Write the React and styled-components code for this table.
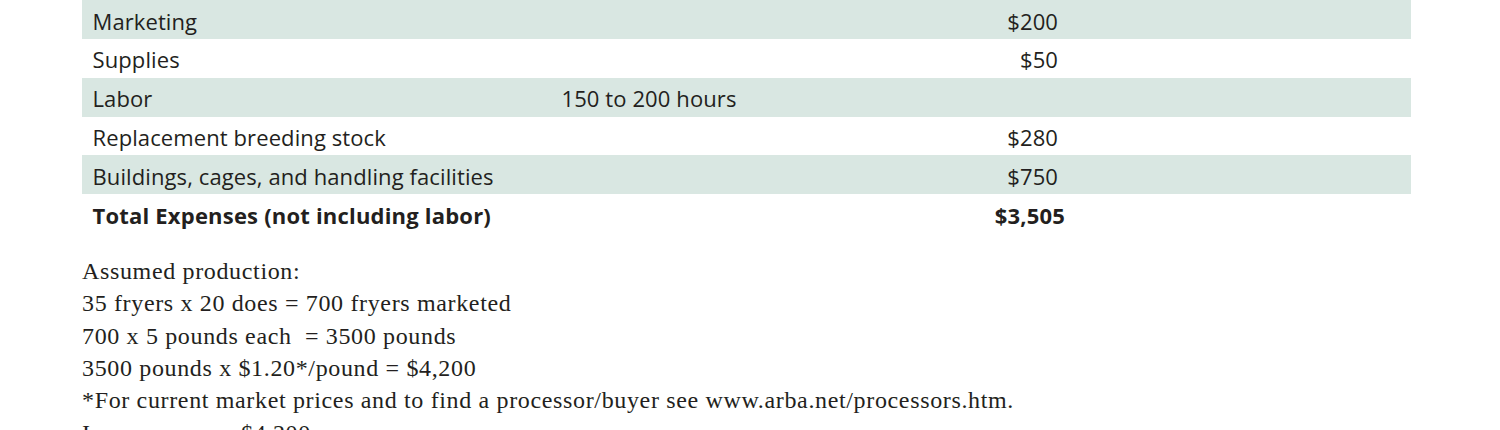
import React from "react";
import styled, { createGlobalStyle } from "styled-components";

const Global = createGlobalStyle`
  html, body { margin: 0; padding: 0; background: #ffffff; }
  body { overflow: hidden; }
`;

const Page = styled.div`
  padding-left: 82px;
  width: 1329px;
  color: #231f20;
`;

const Table = styled.div`
  display: flex;
  flex-direction: column;
`;

const Row = styled.div`
  display: grid;
  grid-template-columns: 469px 408px 106px 1fr;
  height: 38.85px;
  box-sizing: border-box;
  padding-top: 8.6px;
  background: ${(p) => (p.$shaded ? "#d9e7e2" : "transparent")};
  font-family: "Open Sans", "Noto Sans", sans-serif;
  font-size: 22px;
  line-height: 24px;
  font-weight: ${(p) => (p.$bold ? 700 : 400)};
  letter-spacing: ${(p) => (p.$bold ? "0.2px" : "0.1px")};
  white-space: nowrap;
`;

const Label = styled.div`
  padding-left: 10.5px;
`;

const Note = styled.div`
  padding-left: 10.5px;
`;

const Value = styled.div`
  text-align: right;
  padding-right: ${(p) => (p.$bold ? "0px" : "7px")};
`;

const Prose = styled.div`
  margin-top: 22px;
  font-family: "Liberation Serif", "Times New Roman", serif;
  font-size: 24px;
  letter-spacing: 0.65px;
  line-height: 32.3px;
  white-space: nowrap;
`;

const Line = styled.div``;

const Term = styled.span`
  display: inline-block;
  width: 159px;
`;

const rows = [
  { label: "Marketing", note: "", value: "$200" },
  { label: "Supplies", note: "", value: "$50" },
  { label: "Labor", note: "150 to 200 hours", value: "" },
  { label: "Replacement breeding stock", note: "", value: "$280" },
  { label: "Buildings, cages, and handling facilities", note: "", value: "$750" },
  { label: "Total Expenses (not including labor)", note: "", value: "$3,505", bold: true },
];

export default function App() {
  return (
    <>
      <Global />
      <Page>
        <Table>
          {rows.map((r, i) => (
            <Row key={r.label} $shaded={i % 2 === 0 && !r.bold} $bold={r.bold}>
              <Label>{r.label}</Label>
              <Note>{r.note}</Note>
              <Value $bold={r.bold}>{r.value}</Value>
              <div />
            </Row>
          ))}
        </Table>
        <Prose>
          <Line>Assumed production:</Line>
          <Line>35 fryers x 20 does = 700 fryers marketed</Line>
          <Line>700 x 5 pounds each&nbsp; = 3500 pounds</Line>
          <Line>3500 pounds x $1.20*/pound = $4,200</Line>
          <Line>*For current market prices and to find a processor/buyer see www.arba.net/processors.htm.</Line>
          <Line>
            <Term>Income:</Term>$4,200
          </Line>
        </Prose>
      </Page>
    </>
  );
}
